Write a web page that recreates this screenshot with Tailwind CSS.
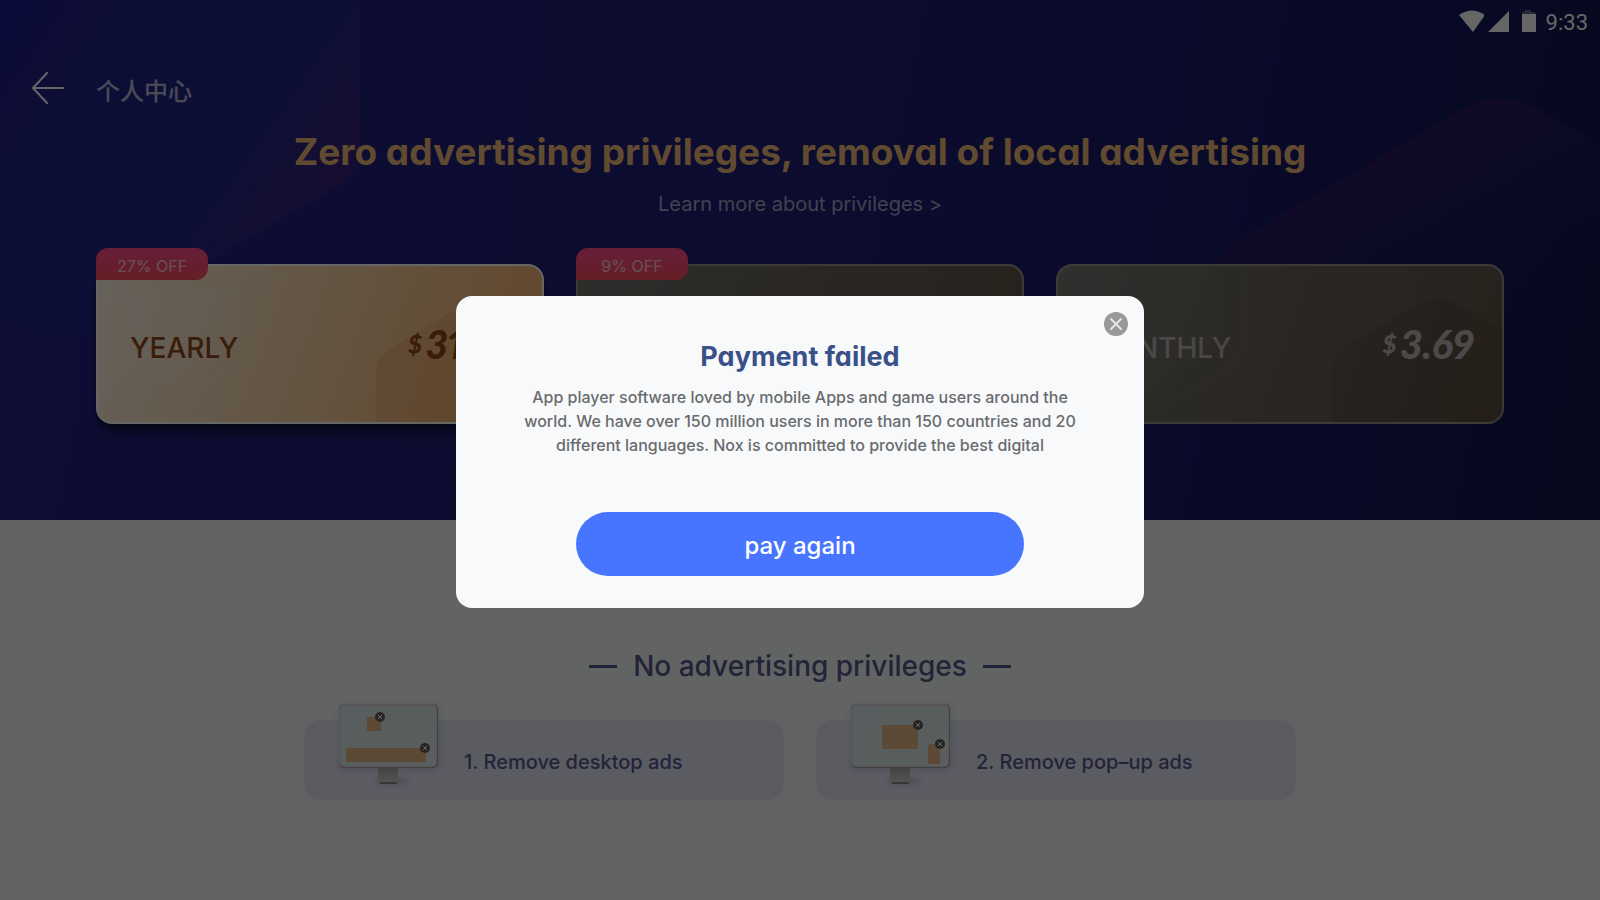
<!DOCTYPE html>
<html lang="en">

<head>
    <meta charset="UTF-8">
    <meta name="viewport" content="width=device-width, initial-scale=1.0">
    <title>Zero advertising privileges</title>
    <script src="https://cdn.jsdelivr.net/npm/@tailwindcss/browser@4"></script>
</head>

<body class="min-h-screen bg-[#f5faf7] font-[Inter,'Noto_Sans_CJK_SC',sans-serif]">
    <header class="relative h-[520px] bg-[#202078] overflow-hidden">
        <!-- Background shapes -->
        <svg class="absolute inset-0 w-full h-full" viewBox="0 0 1600 520" preserveAspectRatio="none" aria-hidden="true">
            <defs>
                <linearGradient id="heroBase" gradientUnits="userSpaceOnUse" x1="0" y1="200" x2="1600" y2="520">
                    <stop offset="0" stop-color="#222285" />
                    <stop offset=".4" stop-color="#20207a" />
                    <stop offset=".75" stop-color="#181866" />
                    <stop offset="1" stop-color="#12164a" />
                </linearGradient>
                <linearGradient id="heroLeft" gradientUnits="userSpaceOnUse" x1="0" y1="20" x2="300" y2="230">
                    <stop offset="0" stop-color="#1c1c90" />
                    <stop offset=".2" stop-color="#222285" />
                    <stop offset=".7" stop-color="#202788" />
                    <stop offset="1" stop-color="#3a227c" />
                </linearGradient>
                <linearGradient id="heroRight" gradientUnits="userSpaceOnUse" x1="1340" y1="180" x2="1440" y2="360">
                    <stop offset="0" stop-color="#2a1a62" />
                    <stop offset=".2" stop-color="#241a5c" />
                    <stop offset=".4" stop-color="#1a1c58" />
                    <stop offset="1" stop-color="#171758" stop-opacity="0" />
                </linearGradient>
            </defs>
            <path d="M0 0H1600V520H0Z" fill="url(#heroBase)" />
            <path d="M0 0H360V150Q356 176 330 190L105 322Q70 344 30 325L0 308Z" fill="url(#heroLeft)" />
            <path d="M1213 520V280Q1213 258 1240 240L1460 110Q1500 88 1540 110L1600 145V520Z" fill="url(#heroRight)" />
        </svg>

        <div class="relative">
            <div class="flex items-center justify-end h-11 pr-3 gap-1 text-white">
                <svg class="w-[26px] h-6" viewBox="0 0 26 24" fill="currentColor" aria-hidden="true">
                    <path d="M1 5Q14 -4 27 5L15 22Z" />
                </svg>
                <svg class="w-[22px] h-6" viewBox="0 0 22 24" fill="currentColor" aria-hidden="true">
                    <path d="M0 22L21 1V22Z" />
                </svg>
                <svg class="w-6 h-6" viewBox="0 0 24 24" fill="currentColor" aria-hidden="true">
                    <path d="M8 2h3V0h6v2h4v2H8z" opacity=".35" />
                    <path d="M8 4h14v18H8z" />
                </svg>
                <span class="font-[Roboto] text-[22px] leading-6 ml-1 pt-px">9:33</span>
            </div>

            <nav class="flex items-center gap-8 h-[88px] px-8 text-white">
                <a href="#" aria-label="Back">
                    <svg class="w-8 h-8" viewBox="0 0 32 32" fill="none" stroke="currentColor" stroke-width="2" stroke-linecap="round" stroke-linejoin="round">
                        <path d="M15 1L1 16L15 31M1 16H31" />
                    </svg>
                </a>
                <span class="text-2xl font-medium text-white/70 pt-2">个人中心</span>
            </nav>
        </div>

        <div class="relative text-center">
            <h1 class="font-bold text-[37px] leading-10 text-[#f0b878] [font-feature-settings:'cv11']">Zero advertising privileges, removal of local advertising</h1>
            <a href="#" class="block w-fit mx-auto mt-4 text-xl leading-8 text-white/60">Learn more about privileges &gt;</a>
        </div>

        <!-- Plans -->
        <div class="relative grid grid-cols-3 gap-8 px-24 mt-11">
            <section class="relative h-40 rounded-2xl border-2 border-white bg-linear-110 from-[#fff4e4] via-[#f8d2a4] to-[#f6b068] bg-origin-border shadow-lg shadow-black/60 flex items-center justify-between pl-8 pr-7">
                <svg class="absolute inset-0 w-full h-full" viewBox="0 0 444 156" aria-hidden="true">
                    <path d="M142 20V64Q142 76 132 82L70 114Q60 120 48 114L20 98L30 30Z" fill="#fff" opacity=".12" />
                    <path d="M166 0V70Q166 82 154 90L90 128" fill="none" stroke="#fff" opacity=".12" />
                    <path d="M278 156V106Q278 92 290 84L370 36Q384 28 398 36L444 62V156Z" fill="#e08a50" opacity=".25" />
                </svg>
                <span class="absolute -top-[18px] -left-[2px] w-28 h-8 rounded-t-xl rounded-br-xl bg-linear-to-b from-[#ff4c8c] to-[#ff4c5c] text-center text-white/70 text-base leading-9">27% OFF</span>
                <h2 class="relative text-[28px] leading-10 pt-2 font-medium text-[#8f4a18]">YEARLY</h2>
                <p class="relative flex items-center gap-1 font-[Lato] font-black italic proportional-nums text-[#8f4a18]"><span class="text-2xl">$</span><span class="text-[40px] leading-10">31.99</span></p>
            </section>
            <section class="relative h-40 rounded-2xl border-2 border-[#9a938a] bg-linear-110 from-[#73736f] to-[#605244] bg-origin-border">
                <span class="absolute -top-[18px] -left-[2px] w-28 h-8 rounded-t-xl rounded-br-xl bg-linear-to-b from-[#ff4c8c] to-[#ff4c5c] text-center text-white/70 text-base leading-9">9% OFF</span>
            </section>
            <section class="relative h-40 rounded-2xl border-2 border-[#9a938a] bg-linear-110 from-[#73736f] to-[#605244] bg-origin-border flex items-center justify-between pl-8 pr-7">
                <svg class="absolute inset-0 w-full h-full" viewBox="0 0 444 156" aria-hidden="true">
                    <path d="M160 0V70Q160 82 150 88L60 140L0 100V0Z" fill="#fff" opacity=".03" />
                    <path d="M184 0V84Q184 96 172 102L70 160" fill="none" stroke="#fff" opacity=".05" />
                    <path d="M274 156V100Q274 88 286 80L366 36Q380 28 394 36L444 62V156Z" fill="#302010" opacity=".1" />
                </svg>
                <h2 class="relative text-[28px] leading-10 pt-2 font-medium text-white/50">MONTHLY</h2>
                <p class="relative flex items-center gap-1 font-[Lato] font-black italic proportional-nums text-white/60"><span class="text-2xl">$</span><span class="text-[40px] leading-10">3.69</span></p>
            </section>
        </div>
    </header>

    <main class="pt-32 text-[#56588e]">
        <div class="flex items-center justify-center gap-4">
            <span class="w-7 h-[3px] bg-current"></span>
            <h2 class="text-[28px] leading-9 font-medium">No advertising privileges</h2>
            <span class="w-7 h-[3px] bg-current"></span>
        </div>
        <div class="grid grid-cols-2 gap-8 max-w-[992px] mx-auto mt-9">
            <section class="relative h-20 rounded-2xl bg-[#e4e6f6] flex items-center pl-40 pt-1">
                <svg class="absolute left-6 -top-6 w-32 h-24" viewBox="0 0 128 96" aria-hidden="true">
                    <defs>
                        <linearGradient id="screen" x1="0" y1="0" x2="1" y2="1">
                            <stop offset="0" stop-color="#dbe8ee" />
                            <stop offset=".5" stop-color="#dce8ea" />
                            <stop offset="1" stop-color="#e2ecee" />
                        </linearGradient>
                        <linearGradient id="stand" x1="0" y1="0" x2="0" y2="1">
                            <stop offset="0" stop-color="#aaa8a4" />
                            <stop offset="1" stop-color="#d4d2cc" />
                        </linearGradient>
                        <filter id="soft" x="-20%" y="-20%" width="140%" height="140%">
                            <feGaussianBlur stdDeviation="3" />
                        </filter>
                        <filter id="softFlat" x="-50%" y="-200%" width="200%" height="500%">
                            <feGaussianBlur stdDeviation="3" />
                        </filter>
                    </defs>
                    <rect x="11" y="10" width="100" height="64" rx="4" fill="#8080b0" opacity=".35" filter="url(#soft)" />
                    <ellipse cx="64" cy="85" rx="16" ry="3" fill="#606090" opacity=".4" filter="url(#softFlat)" />
                    <rect x="11" y="8" width="99" height="64" rx="5" fill="#a8a4a0" />
                    <rect x="11" y="8" width="98" height="63" rx="5" fill="#dcd6d6" />
                    <rect x="13" y="10" width="95" height="60" rx="3" fill="url(#screen)" />
                    <path d="M50 72H70V87H50Z" fill="url(#stand)" />
                    <path d="M52 87H69" stroke="#404040" stroke-width="1" />
                    <rect x="39" y="21" width="14" height="14" rx="1" fill="#e6b688" />
                    <rect x="18" y="52" width="80" height="14" rx="1" fill="#e6b688" />
                    <g fill="#605c5a">
                        <circle cx="52" cy="21" r="5" />
                        <circle cx="97" cy="52" r="5" />
                    </g>
                    <path d="M50 19l4 4m0-4l-4 4M95 50l4 4m0-4l-4 4" stroke="#fff" stroke-width="1" />
                </svg>
                <p class="text-xl font-medium">1. Remove desktop ads</p>
            </section>
            <section class="relative h-20 rounded-2xl bg-[#e4e6f6] flex items-center pl-40 pt-1">
                <svg class="absolute left-6 -top-6 w-32 h-24" viewBox="0 0 128 96" aria-hidden="true">
                    <rect x="11" y="10" width="100" height="64" rx="4" fill="#8080b0" opacity=".35" filter="url(#soft)" />
                    <ellipse cx="64" cy="85" rx="16" ry="3" fill="#606090" opacity=".4" filter="url(#softFlat)" />
                    <rect x="11" y="8" width="99" height="64" rx="5" fill="#a8a4a0" />
                    <rect x="11" y="8" width="98" height="63" rx="5" fill="#dcd6d6" />
                    <rect x="13" y="10" width="95" height="60" rx="3" fill="url(#screen)" />
                    <path d="M50 72H70V87H50Z" fill="url(#stand)" />
                    <path d="M52 87H69" stroke="#404040" stroke-width="1" />
                    <rect x="42" y="29" width="36" height="24" rx="2" fill="#e6b688" />
                    <rect x="88" y="48" width="12" height="20" rx="2" fill="#e6b688" />
                    <g fill="#605c5a">
                        <circle cx="78" cy="29" r="5" />
                        <circle cx="100" cy="48" r="5" />
                    </g>
                    <path d="M76 27l4 4m0-4l-4 4M98 46l4 4m0-4l-4 4" stroke="#fff" stroke-width="1" />
                </svg>
                <p class="text-xl font-medium">2. Remove pop–up ads</p>
            </section>
        </div>
    </main>

    <!-- Payment dialog -->
    <div class="fixed inset-0 pt-1 bg-black/60 flex items-center justify-center">
        <div role="dialog" aria-modal="true" aria-labelledby="dialog-title" class="relative w-[688px] rounded-2xl bg-[#f7f9fb] px-16 pt-[45px] pb-8 text-center">
            <button type="button" aria-label="Close" class="absolute top-4 right-4 w-6 h-6">
                <svg viewBox="0 0 24 24" aria-hidden="true">
                    <circle cx="12" cy="12" r="12" fill="#979899" />
                    <path d="M7 7L17 17M17 7L7 17" stroke="#e4e5e6" stroke-width="2" stroke-linecap="round" />
                </svg>
            </button>
            <h2 id="dialog-title" class="font-bold text-[27px] leading-8 text-[#3a5088] [font-feature-settings:'cv11']">Payment failed</h2>
            <p class="mt-3 text-base leading-6 font-medium text-[#6a6b6d]">App player software loved by mobile Apps and game users around the world. We have over 150 million users in more than 150 countries and 20 different languages. Nox is committed to provide the best digital</p>
            <button type="button" class="mt-[55px] w-[448px] h-16 pt-1 rounded-full bg-[#4775ff] text-2xl font-medium text-white">pay again</button>
        </div>
    </div>
</body>

</html>
